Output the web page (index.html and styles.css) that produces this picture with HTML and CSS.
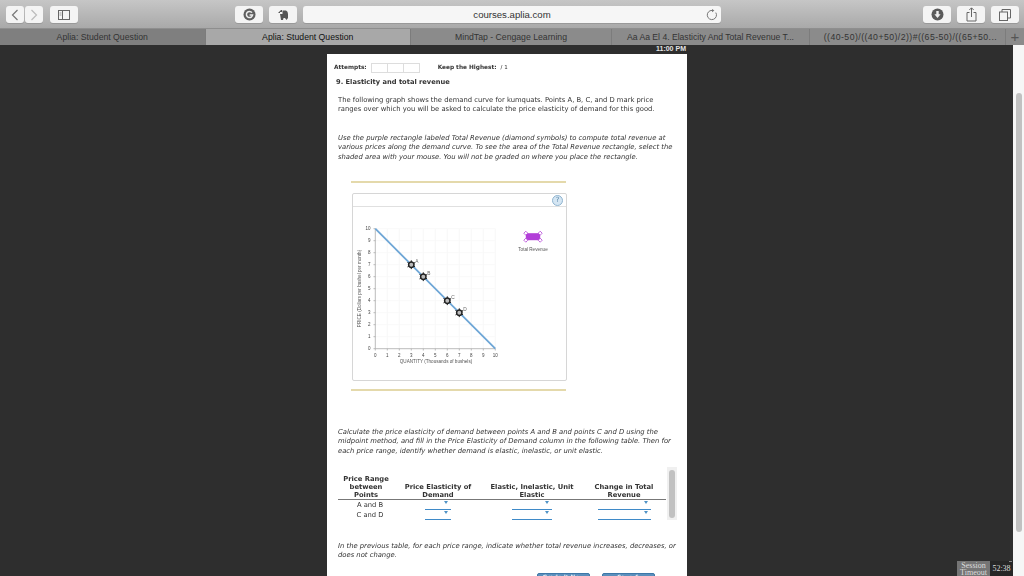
FILE: index.html
```html
<!DOCTYPE html>
<html lang="en">
<head>
    <meta charset="UTF-8">
    <title>Aplia: Student Question</title>
    <link rel="stylesheet" href="styles.css">
</head>
<body>
    <!-- Browser toolbar -->
    <div class="toolbar">
        <div class="nav-group">
            <div class="tool-btn nav-btn">
                <svg width="10" height="14" viewBox="0 0 10 14"><path d="M7.5 2 L2.5 7 L7.5 12" fill="none" stroke="#777" stroke-width="1.2"/></svg>
            </div>
            <div class="tool-btn nav-btn">
                <svg width="10" height="14" viewBox="0 0 10 14"><path d="M2.5 2 L7.5 7 L2.5 12" fill="none" stroke="#bbb" stroke-width="1.2"/></svg>
            </div>
        </div>
        <div class="tool-btn wide-btn sidebar-btn">
            <svg width="12" height="10" viewBox="0 0 12 10"><rect x="0.5" y="0.5" width="11" height="9" fill="none" stroke="#666"/><path d="M4.5 0.5 V9.5" stroke="#666"/><path d="M1.5 3 H3.5 M1.5 5 H3.5" stroke="#999"/></svg>
        </div>
        <div class="tool-btn wide-btn ext-one">
            <svg width="13" height="13" viewBox="0 0 13 13"><circle cx="6.5" cy="6.5" r="6" fill="#5f5f5f"/><path d="M9 4.6 A3.1 3.1 0 1 0 9.6 7 H6.6" fill="none" stroke="#eee" stroke-width="1.5"/></svg>
        </div>
        <div class="tool-btn wide-btn ext-two">
            <svg width="12" height="12" viewBox="0 0 12 12"><path d="M1 4 L4 1 H5 V3 H3 V4 Z M5.5 1.5 H9 Q11 2 11 5 V9 L9.5 11 L8 9 H6.5 L6 11 H4 L3 5 H5.5 Z" fill="#555"/></svg>
        </div>
        <div class="address-bar">
            <span class="address-text">courses.aplia.com</span>
            <svg class="reload" width="12" height="12" viewBox="0 0 12 12"><path d="M9.8 3.6 A4.6 4.6 0 1 1 6 1.4" fill="none" stroke="#777"/><path d="M6 0 L8.4 1.6 L6 3.2 Z" fill="#777"/></svg>
        </div>
        <div class="right-tools">
            <div class="tool-btn wide-btn">
                <svg width="13" height="13" viewBox="0 0 13 13"><circle cx="6.5" cy="6.5" r="6" fill="#5a5a5a"/><path d="M5.3 3 H7.7 V6.2 H9.6 L6.5 10 L3.4 6.2 H5.3 Z" fill="#eee"/></svg>
            </div>
            <div class="tool-btn wide-btn">
                <svg width="11" height="15" viewBox="0 0 11 15"><path d="M3.5 5.5 H1 V14 H10 V5.5 H7.5" fill="none" stroke="#666"/><path d="M5.5 10 V1 M3.3 3 L5.5 0.8 L7.7 3" fill="none" stroke="#666"/></svg>
            </div>
            <div class="tool-btn wide-btn">
                <svg width="12" height="12" viewBox="0 0 12 12"><rect x="0.5" y="3" width="8" height="8.5" fill="none" stroke="#666"/><path d="M3 3 V0.5 H11.5 V9 H8.5" fill="none" stroke="#666"/></svg>
            </div>
        </div>
    </div>

    <!-- Tab strip -->
    <div class="tabs">
        <div class="tab tab-first">Aplia: Student Question</div>
        <div class="tab tab-active">Aplia: Student Question</div>
        <div class="tab tab-mind">MindTap - Cengage Learning</div>
        <div class="tab tab-book">Aa Aa El 4. Elasticity And Total Revenue T...</div>
        <div class="tab tab-calc">((40-50)/((40+50)/2))#((65-50)/((65+50...</div>
        <div class="tab-plus">+</div>
    </div>

    <!-- Dark page area -->
    <div class="page">
        <div class="clock">11:00 PM</div>
        <div class="sheet">
            <div class="attempts">
                <span class="bold-label">Attempts:</span>
                <span class="attempt-boxes"><i></i><i></i><i></i></span>
                <span class="bold-label keep">Keep the Highest:</span>
                <span class="score">/ 1</span>
            </div>
            <h1 class="question-title">9. Elasticity and total revenue</h1>
            <p class="intro">The following graph shows the demand curve for kumquats. Points A, B, C, and D mark price<br>ranges over which you will be asked to calculate the price elasticity of demand for this good.</p>
            <p class="note note-graph">Use the purple rectangle labeled Total Revenue (diamond symbols) to compute total revenue at<br>various prices along the demand curve. To see the area of the Total Revenue rectangle, select the<br>shaded area with your mouse. You will not be graded on where you place the rectangle.</p>

            <div class="rule"></div>
            <div class="graph-box">
                <div class="graph-head"><span class="help">?</span></div>
                <svg class="graph" width="212" height="172" viewBox="353 207 212 172">
                    <defs>
                        <g id="marker">
                            <path d="M0 -4.4V4.4M-3.8 -2.2L3.8 2.2M-3.8 2.2L3.8 -2.2" stroke="#222" stroke-width="1"/>
                            <circle r="2.7" fill="#bbb" stroke="#222" stroke-width="1.5"/>
                        </g>
                    </defs>
                    <g class="grid">
                        <path d="M387.3 228.7V348.7M399.3 228.7V348.7M411.3 228.7V348.7M423.3 228.7V348.7M435.3 228.7V348.7M447.3 228.7V348.7M459.3 228.7V348.7M471.3 228.7V348.7M483.3 228.7V348.7M495.3 228.7V348.7"/>
                        <path d="M375.3 228.7H495.3M375.3 240.7H495.3M375.3 252.7H495.3M375.3 264.7H495.3M375.3 276.7H495.3M375.3 288.7H495.3M375.3 300.7H495.3M375.3 312.7H495.3M375.3 324.7H495.3M375.3 336.7H495.3"/>
                    </g>
                    <path class="axis" d="M375.3 228.7V348.7H495.3"/>
                    <path class="axis" d="M373.5 228.7H375.3M373.5 240.7H375.3M373.5 252.7H375.3M373.5 264.7H375.3M373.5 276.7H375.3M373.5 288.7H375.3M373.5 300.7H375.3M373.5 312.7H375.3M373.5 324.7H375.3M373.5 336.7H375.3M373.5 348.7H375.3"/>
                    <path class="axis" d="M375.3 348.7V350.5M387.3 348.7V350.5M399.3 348.7V350.5M411.3 348.7V350.5M423.3 348.7V350.5M435.3 348.7V350.5M447.3 348.7V350.5M459.3 348.7V350.5M471.3 348.7V350.5M483.3 348.7V350.5M495.3 348.7V350.5"/>
                    <line class="demand" x1="375.3" y1="228.7" x2="495.3" y2="348.7"/>

                    <g class="tick-text" text-anchor="end">
                        <text x="370.5" y="230.4">10</text><text x="370.5" y="242.4">9</text><text x="370.5" y="254.4">8</text><text x="370.5" y="266.4">7</text><text x="370.5" y="278.4">6</text><text x="370.5" y="290.4">5</text><text x="370.5" y="302.4">4</text><text x="370.5" y="314.4">3</text><text x="370.5" y="326.4">2</text><text x="370.5" y="338.4">1</text><text x="370.5" y="350.4">0</text>
                    </g>
                    <g class="tick-text" text-anchor="middle">
                        <text x="375.3" y="356.8">0</text><text x="387.3" y="356.8">1</text><text x="399.3" y="356.8">2</text><text x="411.3" y="356.8">3</text><text x="423.3" y="356.8">4</text><text x="435.3" y="356.8">5</text><text x="447.3" y="356.8">6</text><text x="459.3" y="356.8">7</text><text x="471.3" y="356.8">8</text><text x="483.3" y="356.8">9</text><text x="495.3" y="356.8">10</text>
                    </g>
                    <text class="axis-title" x="436" y="363" text-anchor="middle">QUANTITY (Thousands of bushels)</text>
                    <text class="axis-title" transform="translate(360.5 288.5) rotate(-90)" text-anchor="middle">PRICE (Dollars per bushel per month)</text>

                    <use href="#marker" x="411.3" y="264.7"/>
                    <use href="#marker" x="423.3" y="276.7"/>
                    <use href="#marker" x="447.3" y="300.7"/>
                    <use href="#marker" x="459.3" y="312.7"/>
                    <g class="point-label">
                        <text x="415.2" y="262.8">A</text><text x="427.2" y="275.4">B</text><text x="451.2" y="298.8">C</text><text x="463.2" y="310.8">D</text>
                    </g>

                    <rect class="tr-box" x="525.8" y="233.2" width="14.4" height="7"/>
                    <g class="tr-handle">
                        <path d="M525.8 231.2 L527.8 233.2 L525.8 235.2 L523.8 233.2 Z"/><path d="M540.2 231.2 L542.2 233.2 L540.2 235.2 L538.2 233.2 Z"/><path d="M525.8 238.2 L527.8 240.2 L525.8 242.2 L523.8 240.2 Z"/><path d="M540.2 238.2 L542.2 240.2 L540.2 242.2 L538.2 240.2 Z"/>
                    </g>
                    <text class="axis-title" x="533" y="251" text-anchor="middle">Total Revenue</text>
                </svg>
            </div>
            <div class="rule rule-bottom"></div>

            <p class="note note-table">Calculate the price elasticity of demand between points A and B and points C and D using the<br>midpoint method, and fill in the Price Elasticity of Demand column in the following table. Then for<br>each price range, identify whether demand is elastic, inelastic, or unit elastic.</p>

            <div class="table-wrap">
                <table class="answers">
                    <thead>
                        <tr>
                            <th class="col-range">Price Range<br>between<br>Points</th>
                            <th class="col-price">Price Elasticity of<br>Demand</th>
                            <th class="col-elastic">Elastic, Inelastic, Unit<br>Elastic</th>
                            <th class="col-change">Change in Total<br>Revenue</th>
                        </tr>
                    </thead>
                    <tbody>
                        <tr>
                            <td class="row-name">A and B</td>
                            <td><span class="drop drop-a"></span></td>
                            <td><span class="drop drop-b"></span></td>
                            <td><span class="drop drop-c"></span></td>
                        </tr>
                        <tr>
                            <td class="row-name">C and D</td>
                            <td><span class="drop drop-a"></span></td>
                            <td><span class="drop drop-b"></span></td>
                            <td><span class="drop drop-c"></span></td>
                        </tr>
                    </tbody>
                </table>
                <div class="table-scroll"><div class="table-thumb"></div></div>
            </div>

            <p class="note note-last">In the previous table, for each price range, indicate whether total revenue increases, decreases, or<br>does not change.</p>

            <div class="actions">
                <button class="action-btn">Grade It Now</button>
                <button class="action-btn">Save &amp;</button>
            </div>
        </div>

        <div class="page-scroll"><div class="page-thumb"></div></div>
        <div class="session">
            <span class="session-label">Session<br>Timeout</span>
            <span class="session-time">52:38</span>
        </div>
    </div>
</body>
</html>
```

FILE: styles.css
```css
html, body {
    margin: 0;
    padding: 0;
    height: 100%;
    overflow: hidden;
}

body {
    width: 1024px;
    height: 576px;
    display: flex;
    flex-direction: column;
    font-family: "DejaVu Sans", sans-serif;
    background-color: #2e2e2e;
}

/* Browser toolbar */
.toolbar {
    height: 28px;
    flex-shrink: 0;
    box-sizing: border-box;
    padding-top: 6px;
    display: flex;
    align-items: flex-start;
    background: linear-gradient(#c6c6c6, #a9a9a9);
}

.tool-btn {
    height: 17px;
    background-color: #f4f4f4;
    border-radius: 3px;
    display: flex;
    align-items: center;
    justify-content: center;
    box-shadow: 0 1px 0 #999;
}

.nav-group {
    display: flex;
    gap: 1px;
    margin-left: 6px;
}

.nav-btn {
    width: 18px;
}

.wide-btn {
    width: 28px;
}

.sidebar-btn {
    margin-left: 7px;
}

.ext-one {
    margin-left: 157px;
}

.ext-two {
    margin-left: 6px;
}

.address-bar {
    width: 418px;
    height: 17px;
    margin-left: 6px;
    background-color: #f6f6f6;
    border-radius: 3px;
    box-shadow: 0 1px 0 #999;
    display: flex;
    align-items: center;
    position: relative;
}

.address-text {
    width: 100%;
    text-align: center;
    font-family: "Liberation Sans", sans-serif;
    font-size: 9.6px;
    color: #333;
}

.reload {
    position: absolute;
    right: 3px;
    top: 3px;
}

.right-tools {
    display: flex;
    gap: 6px;
    margin-left: 202px;
}

/* Tab strip */
.tabs {
    height: 17px;
    flex-shrink: 0;
    display: flex;
    background-color: #8b8b8b;
    border-top: 1px solid #8e8e8e;
    box-sizing: border-box;
}

.tab {
    width: 205.5px;
    flex-shrink: 0;
    box-sizing: border-box;
    border-right: 1px solid #7c7c7c;
    text-align: center;
    font-family: "Liberation Sans", sans-serif;
    font-size: 8.7px;
    line-height: 16px;
    color: #333;
    white-space: nowrap;
}

.tab-first {
    background-color: #7f7f7f;
}

.tab-active {
    background-color: #a8a8a8;
    color: #111;
}

.tab-mind {
    width: 201px;
}

.tab-book {
    width: 198px;
    font-size: 8.6px;
}

.tab-calc {
    width: 196px;
    padding-left: 6px;
    letter-spacing: 0.45px;
}

.tab-plus {
    flex: 1;
    text-align: center;
    font-family: "Liberation Sans", sans-serif;
    font-size: 15px;
    line-height: 15px;
    color: #555;
}

/* Page */
.page {
    flex: 1;
    position: relative;
    overflow: hidden;
}

.clock {
    position: absolute;
    left: 656px;
    top: 0;
    font-family: "Liberation Sans", sans-serif;
    font-size: 7px;
    line-height: 7px;
    font-weight: bold;
    color: #e4e4e4;
}

.sheet {
    width: 360px;
    height: 560px;
    box-sizing: border-box;
    margin: 9px 0 0 327px;
    overflow: hidden;
    background-color: #fff;
    color: #333;
    font-size: 6.8px;
    line-height: 9.3px;
    white-space: nowrap;
    filter: blur(0.25px);
}

.attempts {
    display: flex;
    align-items: center;
    padding: 7px 0 0 7px;
    height: 13px;
}

.bold-label {
    font-weight: bold;
    font-size: 5.8px;
}

.attempt-boxes {
    display: flex;
    margin-left: 4px;
    border: 1px solid #ddd;
}

.attempt-boxes i {
    width: 15px;
    height: 8px;
    border-right: 1px solid #ddd;
}

.attempt-boxes i:last-child {
    border-right: none;
}

.keep {
    margin-left: 18px;
}

.score {
    margin-left: 4px;
    font-size: 5.5px;
}

.question-title {
    margin: 4px 0 0 9px;
    font-size: 6.7px;
    line-height: 9px;
    font-weight: bold;
}

.intro {
    margin: 9px 0 0 11px;
}

.note {
    font-style: italic;
    margin-left: 11px;
    margin-bottom: 0;
}

.note-graph {
    margin-top: 19.5px;
}

.rule {
    width: 215px;
    height: 2px;
    margin: 19.5px 0 0 24px;
    background-color: #e4d9ab;
}

.rule-bottom {
    margin-top: 8px;
}

.graph-box {
    width: 213px;
    height: 186px;
    margin: 10px 0 0 25px;
    border: 1px solid #d6d6d6;
    border-radius: 2px;
}

.graph-head {
    height: 12px;
    border-bottom: 1px solid #e0e0e0;
    display: flex;
    justify-content: flex-end;
    padding-right: 3px;
}

.help {
    width: 9px;
    height: 9px;
    margin-top: 1px;
    border-radius: 50%;
    background-color: #d5e6f3;
    border: 1px solid #8fb4d0;
    font-size: 7px;
    line-height: 9px;
    text-align: center;
    color: #5a86a8;
}

.graph {
    display: block;
    filter: blur(0.2px);
}

.grid path {
    stroke: #f6f6f6;
    stroke-width: 0.8;
    fill: none;
}

.axis {
    stroke: #aaa;
    stroke-width: 0.8;
    fill: none;
}

.demand {
    stroke: #6ea6d6;
    stroke-width: 1.8;
}

.tick-text text {
    font-family: "Liberation Sans", sans-serif;
    font-size: 4.5px;
    fill: #444;
}

.axis-title {
    font-family: "Liberation Sans", sans-serif;
    font-size: 4.6px;
    fill: #555;
}

.point-label text {
    font-family: "Liberation Sans", sans-serif;
    font-size: 4.8px;
    fill: #666;
}

.tr-box {
    fill: #b23fd8;
}

.tr-handle path {
    fill: #fff;
    stroke: #b23fd8;
    stroke-width: 0.8;
}

.note-table {
    margin-top: 36.5px;
}

/* Answer table */
.table-wrap {
    display: flex;
    align-items: flex-start;
    margin: 19.5px 0 0 11px;
    height: 45px;
}

.answers {
    width: 328px;
    table-layout: fixed;
    border-collapse: collapse;
    font-size: 6.75px;
    line-height: 8px;
    text-align: center;
    color: #333;
}

.answers th {
    vertical-align: bottom;
    font-weight: bold;
    padding: 0;
    border-bottom: 1px solid #777;
}

.answers td {
    padding: 0;
    height: 10px;
    line-height: 10px;
}

.answers .row-name {
    padding-left: 8px;
}

.col-range {
    width: 56px;
}

.col-price {
    width: 88px;
}

.col-elastic {
    width: 100px;
}

.col-change {
    width: 84px;
}

.drop {
    display: block;
    height: 9px;
    margin: 0 auto;
    border-bottom: 1px solid #3f8ac8;
    position: relative;
}

.drop::after {
    content: "";
    position: absolute;
    right: 3px;
    top: 1px;
    border-left: 2.5px solid transparent;
    border-right: 2.5px solid transparent;
    border-top: 3px solid #4f93c6;
}

.drop-a {
    width: 26px;
}

.drop-b {
    width: 40px;
}

.drop-c {
    width: 53px;
}

.table-scroll {
    width: 10px;
    height: 50px;
    margin: -8px 0 0 1px;
    padding-top: 3px;
    background-color: #f0f0f0;
}

.table-thumb {
    width: 6px;
    height: 48px;
    margin-left: 2px;
    border-radius: 3px;
    background-color: #c1c1c1;
}

.note-last {
    margin-top: 21.5px;
}

.actions {
    display: flex;
    gap: 12px;
    margin: 12.5px 0 0 210px;
}

.action-btn {
    width: 53px;
    height: 16px;
    padding: 0 0 10px;
    border: 1px solid #3d77a8;
    border-radius: 2px;
    background-color: #5b8fbc;
    font-family: "DejaVu Sans", sans-serif;
    font-size: 5.7px;
    font-weight: bold;
    color: #e2edf5;
    line-height: 7px;
}

/* Scrollbar and timer */
.page-scroll {
    position: absolute;
    right: 0;
    top: 0;
    bottom: 0;
    width: 11px;
    background-color: #f6f6f6;
}

.page-thumb {
    width: 6px;
    height: 439px;
    margin: 48px 0 0 3px;
    border-radius: 3px;
    background-color: #c1c1c1;
}

.session {
    position: absolute;
    right: 11px;
    bottom: 0;
    display: flex;
    height: 15px;
    font-family: "Liberation Serif", serif;
    font-size: 8px;
    color: #ddd;
}

.session-label {
    width: 33px;
    background-color: #757575;
    line-height: 7px;
    text-align: center;
    padding-top: 1px;
}

.session-time {
    width: 23px;
    background-color: #262626;
    line-height: 15px;
    text-align: center;
    position: relative;
}

/* minimise mark on the timer */
.session-time::after {
    content: "";
    position: absolute;
    right: 1px;
    top: 0;
    width: 3px;
    height: 1px;
    background-color: #888;
}
```
